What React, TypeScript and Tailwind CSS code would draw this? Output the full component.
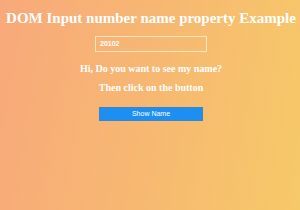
export default function App() {
  return (
    <div className="w-[300px] h-[210px] overflow-hidden bg-[linear-gradient(100deg,#f8a97a_0%,#f7b872_50%,#f6c968_100%)] flex flex-col items-center pl-[2px]" style={{ fontFamily: '"Liberation Serif", serif' }}>
      <h1 className="mt-[8px] text-[15px] leading-[20px] font-bold text-white whitespace-nowrap">DOM Input number name property Example</h1>
      <div className="mt-[8px] w-[112px] h-[16px] border border-[#fbe7bf] flex items-center pl-[4px]">
        <span className="text-[7px] font-bold text-white" style={{ fontFamily: '"Liberation Sans", sans-serif' }}>20102</span>
      </div>
      <p className="mt-[11px] text-[10px] leading-[12px] font-bold text-white">Hi, Do you want to see my name?</p>
      <p className="mt-[7px] text-[10px] leading-[12px] font-bold text-white">Then click on the button</p>
      <button className="mt-[13px] w-[104px] h-[14px] bg-[#1e8ff2] border border-[#3a86c8] text-white text-[7px] flex items-center justify-center" style={{ fontFamily: '"Liberation Sans", sans-serif' }}>Show Name</button>
    </div>
  );
}
